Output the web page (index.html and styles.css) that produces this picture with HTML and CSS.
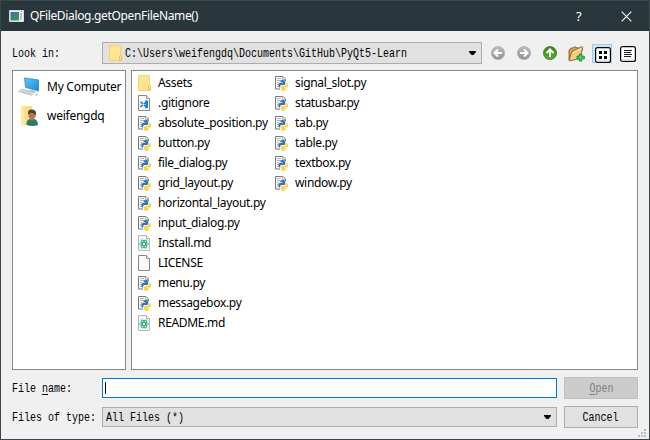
FILE: index.html
```
<!DOCTYPE html>
<html lang="en">
<head>
<meta charset="utf-8">
<title>QFileDialog.getOpenFileName()</title>
<link rel="stylesheet" href="styles.css">
</head>
<body>
<svg class="defs" aria-hidden="true">
  <defs>
    <linearGradient id="screen" x1="0" y1="0" x2="1" y2="1"><stop offset="0" stop-color="#62c8fb"/><stop offset="1" stop-color="#1687d9"/></linearGradient>
    <linearGradient id="gray" x1="0" y1="0" x2="0" y2="1"><stop offset="0" stop-color="#bdbdbd"/><stop offset="1" stop-color="#929292"/></linearGradient>
    <linearGradient id="green" x1="0" y1="0" x2="0" y2="1"><stop offset="0" stop-color="#3c861c"/><stop offset="1" stop-color="#5fae2a"/></linearGradient>
    <linearGradient id="appfill" x1="0" y1="0" x2="1" y2="1"><stop offset="0" stop-color="#3c6f9c"/><stop offset="1" stop-color="#3e9b62"/></linearGradient>
  </defs>
  <symbol id="folder" viewBox="0 0 13 16">
    <path d="M.5.5h11v10l1 .8v4.200H.5z" fill="#ffe591" stroke="#f3d267"/>
    <path d="M10.500 15.500v-4.300l1-.8 1 .8v4.300z" fill="#ffe083" stroke="#e5bd43" stroke-width=".8"/>
  </symbol>
  <symbol id="page" viewBox="0 0 13 16">
    <path d="M.5.5h8l3 3v12H.5z" fill="#fafafa" stroke="#878787"/>
    <path d="M8.500.5v3h3" fill="#eee" stroke="#999"/>
  </symbol>
  <symbol id="code" viewBox="0 0 13 16">
    <use href="#page" width="13" height="16"/>
    <path d="M7.500 4.800l2.500 1v7l-2.500 1zM7.500 6.500v2.300l-4.600 3.700-1-1zM7.500 12.300V10L2.900 6.300l-1 1z" fill="#1581ce"/>
  </symbol>
  <symbol id="md" viewBox="0 0 13 16">
    <path d="M.5.5h8l3 3v12H.5z" fill="#f5f5f5" stroke="#b8b8b8"/>
    <path d="M8.500.5v3h3" fill="#fff" stroke="#aaa"/>
    <g fill="none" stroke="#20b27c" stroke-width=".9"><ellipse cx="6" cy="9" rx="4.500" ry="1.700"/><ellipse cx="6" cy="9" rx="4.500" ry="1.700" transform="rotate(60 6 9)"/><ellipse cx="6" cy="9" rx="4.500" ry="1.700" transform="rotate(120 6 9)"/></g>
  </symbol>
  <symbol id="py" viewBox="0 0 13 16">
    <path d="M.5 1.500h7.500l3 3v10H.5z" fill="#fafafa"/>
    <path d="M5 14H.5V1.500H8l2.500 2.500v2" fill="none" stroke="#777"/>
    <path d="M7.500 1.500v3h3M2 3.500h4M2 5.500h4M2 7.500h2M2 9.500h1M2 11.500h1" fill="none" stroke="#b5b5b5"/>
    <path d="M5.500 6.300q0-1.300 2.200-1.300 2.500 0 2.500 1.300v2.500q0 1.300-1.400 1.300H6.500q-1.300 0-1.300 1.300v1h-.7q-1.300 0-1.300-2.200t1.500-2.200h3v-.5H5.500z" fill="#3575ab"/>
    <path d="M10.800 8.200h.7q1.500 0 1.500 2.200t-1.500 2.200H8.700v.5h2v1.500q0 1.400-2.300 1.400T6 14.600v-2.400q0-1.300 1.400-1.300h2q1.400 0 1.400-1.300z" fill="#fbd447"/>
  </symbol>
</svg>

<main class="window">
  <header class="titlebar">
    <svg class="app-icon" viewBox="0 0 15 12"><path d="M.5.5h14v11H.5z" fill="#f2f4f3" stroke="#d7dddd"/><path d="M1.500 2h8.500v8.500H1.500z" fill="url(#appfill)"/><path d="M11 3h2v7h-2z" fill="#b9c0c0"/><path d="M12 1h1v1h-1z" fill="#4daf50"/></svg>
    <h1 class="title">QFileDialog.getOpenFileName()</h1>
    <span class="help">?</span>
    <svg class="close" viewBox="0 0 11 11"><path d="M.7.700l9.600 9.600M10.300.7L.7 10.300" stroke="#fff" stroke-width="1.100"/></svg>
  </header>

  <div class="content">
    <div class="look-row">
      <span class="pixel"><span class="glyphs">Look in:</span></span>
      <div class="combo path">
        <svg class="file-icon"><use href="#folder"/></svg>
        <span class="pixel"><span class="glyphs">C:\Users\weifengdq\Documents\GitHub\PyQt5-Learn</span></span>
        <svg class="arrow" viewBox="0 0 7 4"><path d="M0 0h7v1L4.500 4h-2L0 1z"/></svg>
      </div>
      <div class="tools">
        <svg class="round" viewBox="0 0 14 14"><circle cx="7" cy="7" r="6.600" fill="url(#gray)" stroke="#aaa" stroke-width=".7"/><path d="M11 7H4M7 3.500L3.500 7 7 10.500" fill="none" stroke="#fff" stroke-width="2"/></svg>
        <svg class="round" viewBox="0 0 14 14"><circle cx="7" cy="7" r="6.600" fill="url(#gray)" stroke="#aaa" stroke-width=".7"/><path d="M3 7h7M7 3.500l3.500 3.500L7 10.500" fill="none" stroke="#fff" stroke-width="2"/></svg>
        <svg class="round" viewBox="0 0 14 14"><circle cx="7" cy="7" r="6.600" fill="url(#green)" stroke="#38761c" stroke-width=".7"/><path d="M7 11V4M3.500 7L7 3.500 10.500 7" fill="none" stroke="#fff" stroke-width="2"/></svg>
        <svg class="new-folder" viewBox="0 0 17 17"><path d="M1 15V5l2-2h2l1-1h2l1 1h4l1 1v2" fill="#dba754" stroke="#76511f" stroke-width=".8"/><path d="M1 15.500L4 6h1l9-4.500.7 1L12 13.500 2 15.800z" fill="#f5cd83" stroke="#83602d" stroke-width=".9"/><path d="M4.500 7.500L13 4" stroke="#fff1c5"/><path d="M11.300 9h2.500v2.200h2.500v2.600h-2.500V16h-2.500v-2.200H9v-2.600h2.300z" fill="#45cf66" stroke="#167d34" stroke-width=".9"/></svg>
        <span class="view active"><svg viewBox="0 0 16 16"><rect x=".6" y=".6" width="14.800" height="14.800" rx="2" fill="#fff" stroke="#080808" stroke-width="1.200"/><path d="M2 14h12" stroke="#bed6f8"/><path d="M4 4h3v3H4zM9 4h3v3H9zM4 9h3v3H4zM9 9h3v3H9z"/></svg></span>
        <span class="view list"><svg viewBox="0 0 16 16"><rect x=".6" y=".6" width="14.800" height="14.800" rx="2" fill="#fff" stroke="#080808" stroke-width="1.200"/><path d="M2 14h12" stroke="#bed6f8"/><path d="M4 4.500h8M4 6.500h7M4 8.500h8M4 10.500h7" stroke="#222"/></svg></span>
      </div>
    </div>

    <div class="panes">
      <nav class="pane places">
        <div class="place"><svg viewBox="0 0 24 24"><path d="M7 2.300l15 2v12.500L8 13.200z" fill="#d9edf7"/><path d="M7.500 3l14 1.900v11L8.500 12.300z" fill="url(#screen)" stroke="#2778a5" stroke-width=".6"/><path d="M14 15l-1.500 2 5 1 1-2" fill="#a5b6bf"/><path d="M1.500 16.500l3-2.500 13 3-2.800 3.200z" fill="#e4e9eb" stroke="#a7b0b5" stroke-width=".7"/><path d="M4 16.500l10 2.400M5.500 15.200l9.800 2.400" stroke="#aab1b5" stroke-width=".6"/><path d="M17.500 20l2-1.500 1.800.7-2 1.800z" fill="#bfc7ca"/></svg><span>My Computer</span></div>
        <div class="place"><svg viewBox="0 0 24 24"><path d="M4 2h11v19H4z" fill="#fbdc83"/><path d="M4 2l3.500 2v18L4 20.500z" fill="#ffe9aa"/><path d="M9.500 21q-.5-6.500 5.500-6.500t6 6.500q-5 2-11.500 0z" fill="#2f7a60"/><path d="M13 12h4v3l-2 2-2-2z" fill="#b77e50"/><ellipse cx="15" cy="10.500" rx="3.600" ry="4.500" fill="#b5784c"/><path d="M11 9.500Q10.500 5.500 14.500 5.500q4.500 0 4.500 4l-.7 2.500-1-2.500-4-1-1 2z" fill="#4c4137"/></svg><span>weifengdq</span></div>
      </nav>
      <ul class="pane files">
        <li><svg class="file-icon"><use href="#folder"/></svg>Assets</li>
        <li><svg class="file-icon"><use href="#code"/></svg>.gitignore</li>
        <li><svg class="file-icon"><use href="#py"/></svg>absolute_position.py</li>
        <li><svg class="file-icon"><use href="#py"/></svg>button.py</li>
        <li><svg class="file-icon"><use href="#py"/></svg>file_dialog.py</li>
        <li><svg class="file-icon"><use href="#py"/></svg>grid_layout.py</li>
        <li><svg class="file-icon"><use href="#py"/></svg>horizontal_layout.py</li>
        <li><svg class="file-icon"><use href="#py"/></svg>input_dialog.py</li>
        <li><svg class="file-icon"><use href="#md"/></svg>Install.md</li>
        <li><svg class="file-icon"><use href="#page"/></svg>LICENSE</li>
        <li><svg class="file-icon"><use href="#py"/></svg>menu.py</li>
        <li><svg class="file-icon"><use href="#py"/></svg>messagebox.py</li>
        <li><svg class="file-icon"><use href="#md"/></svg>README.md</li>
        <li><svg class="file-icon"><use href="#py"/></svg>signal_slot.py</li>
        <li><svg class="file-icon"><use href="#py"/></svg>statusbar.py</li>
        <li><svg class="file-icon"><use href="#py"/></svg>tab.py</li>
        <li><svg class="file-icon"><use href="#py"/></svg>table.py</li>
        <li><svg class="file-icon"><use href="#py"/></svg>textbox.py</li>
        <li><svg class="file-icon"><use href="#py"/></svg>window.py</li>
      </ul>
    </div>

    <div class="form">
      <span class="pixel"><span class="glyphs">File <u>n</u>ame:</span></span>
      <div class="field"><span class="caret"></span></div>
      <div class="button disabled"><span class="pixel"><span class="glyphs"><u>O</u>pen</span></span></div>
      <span class="pixel"><span class="glyphs">Files of type:</span></span>
      <div class="combo type">
        <span class="pixel"><span class="glyphs">All Files (*)</span></span>
        <svg class="arrow" viewBox="0 0 7 4"><path d="M0 0h7v1L4.500 4h-2L0 1z"/></svg>
      </div>
      <div class="button"><span class="pixel"><span class="glyphs">Cancel</span></span></div>
    </div>
  </div>
  <svg class="grip" viewBox="0 0 8 8" fill="#bdbdbd"><path d="M6 0h2v2H6zM3 3h2v2H3zM6 3h2v2H6zM0 6h2v2H0zM3 6h2v2H3zM6 6h2v2H6z"/></svg>
</main>
</body>
</html>
```
FILE: styles.css
```
* { box-sizing: border-box; }
body { margin: 0; font: 12px/20px "Noto Sans", sans-serif; color: #000; }
svg { display: block; flex: none; }
.defs { position: absolute; width: 0; height: 0; }

.window {
  position: relative;
  width: 650px;
  height: 440px;
  display: flex;
  flex-direction: column;
  background: #f0f0f0;
  border: 1px solid #3b4849;
  overflow: hidden;
}
.titlebar {
  height: 30px;
  flex: none;
  display: flex;
  align-items: center;
  padding: 0 17px 0 8px;
  background: #29363b;
  color: #fff;
}
.app-icon { width: 15px; height: 12px; margin-right: 6px; }
.title { flex: 1; margin: 0; font-size: 12px; font-weight: 400; letter-spacing: -0.34px; }
.help { width: 10px; margin-right: 35px; font-size: 13px; }
.close { width: 11px; height: 11px; }

.content { flex: 1; padding: 11px 11px 11px; }
.look-row { display: flex; align-items: center; height: 22px; }
.look-row > .pixel { width: 90px; flex: none; }

/* Terminal glyphs narrowed to a six pixel advance */
.pixel { display: block; padding-top: 2px; font: 12px/16px "Liberation Mono", monospace; white-space: pre; }
.glyphs { display: inline-block; transform: scaleX(0.8333); transform-origin: left; }
.pixel u { text-underline-offset: 2px; }

.combo {
  display: flex;
  align-items: center;
  position: relative;
  background: #e1e1e1;
  border: 1px solid #adadad;
}
.path { width: 380px; height: 22px; padding-left: 6px; flex: none; }
.path .pixel { width: 283px; }
.path .file-icon { margin-right: 3px; }
.arrow { position: absolute; right: 5px; top: 50%; margin-top: -2px; width: 7px; height: 4px; }
.file-icon { width: 13px; height: 16px; }

.tools { display: flex; align-items: center; margin-left: 9px; flex: none; }
.round { width: 14px; height: 14px; margin-right: 12px; }
.round:first-child { margin-left: -0.5px; }
.new-folder { width: 17px; height: 17px; margin: 0 7.5px 0 -1px; }
.view { width: 20px; height: 19px; padding: 3px 1px 0 3px; margin-right: 5px; }
.list { padding-top: 2px; }
.view svg { width: 16px; height: 16px; }
.active { background: #cce4f7; box-shadow: inset 0 0 0 1px #99cdf3; }

.panes { display: flex; gap: 5px; height: 300px; margin-top: 6px; }
.pane { background: #fff; border: 1px solid #828790; }
.places { width: 114px; padding: 2px 0 0 4px; }
.place { display: flex; align-items: center; height: 28px; white-space: nowrap; }
.place + .place { margin-top: 1px; }
.place svg { width: 24px; height: 24px; margin-right: 6px; }
.place span { letter-spacing: -0.25px; }
.files {
  flex: 1;
  margin: 0;
  padding: 2px 0 0 6px;
  list-style: none;
  display: grid;
  grid-auto-flow: column;
  grid-template-rows: repeat(13, 20px);
  grid-template-columns: 137px 1fr;
}
.files li { display: flex; align-items: center; letter-spacing: -0.32px; white-space: nowrap; }
.files .file-icon { margin-right: 7px; }

.form {
  display: grid;
  grid-template-columns: 90px 455px 74px;
  column-gap: 0;
  row-gap: 7px;
  grid-template-rows: 22px 22px;
  align-items: center;
  margin-top: 7px;
}
.form .button { margin-left: 7px; width: 74px; }
.field { height: 20px; background: #fff; border: 1px solid #0078d7; padding: 3px 2px; }
.caret { display: block; width: 1px; height: 12px; background: #000; }
.type { height: 20px; padding-left: 3px; }
.button {
  height: 22px;
  display: flex;
  align-items: center;
  justify-content: center;
  background: #e1e1e1;
  border: 1px solid #adadad;
}
.button .glyphs { transform-origin: center; }
.disabled { background: #ccc; border-color: #bfbfbf; color: #808080; }
.grip { position: absolute; right: 3px; bottom: 2px; width: 8px; height: 8px; }
```
